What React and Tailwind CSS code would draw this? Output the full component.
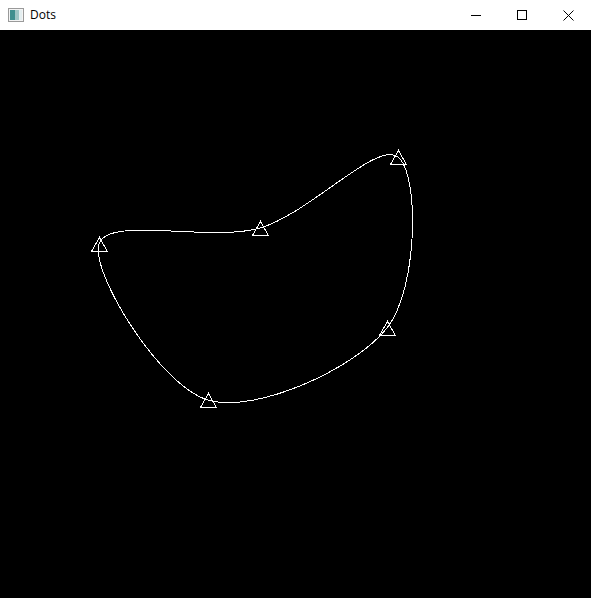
import React from "react";

const pts = [
  [99, 244],
  [260, 228],
  [398, 157],
  [387, 328],
  [208, 400],
];

function catmull(points) {
  const n = points.length;
  let d = `M ${points[0][0]} ${points[0][1]}`;
  for (let i = 0; i < n; i++) {
    const p0 = points[(i - 1 + n) % n];
    const p1 = points[i];
    const p2 = points[(i + 1) % n];
    const p3 = points[(i + 2) % n];
    const c1 = [p1[0] + (p2[0] - p0[0]) / 6, p1[1] + (p2[1] - p0[1]) / 6];
    const c2 = [p2[0] - (p3[0] - p1[0]) / 6, p2[1] - (p3[1] - p1[1]) / 6];
    d += ` C ${c1[0]} ${c1[1]} ${c2[0]} ${c2[1]} ${p2[0]} ${p2[1]}`;
  }
  return d + " Z";
}

function AppIcon() {
  return (
    <svg width="16" height="14" viewBox="0 0 16 14">
      <rect x="0.5" y="0.5" width="15" height="13" fill="#f4f4f4" stroke="#9a9a9a" />
      <rect x="2" y="2" width="5" height="10" fill="#3f8f8f" />
      <rect x="7" y="2" width="4" height="10" fill="#9fc6c6" />
      <rect x="11" y="2" width="3" height="10" fill="#e4eef0" />
    </svg>
  );
}

export default function App() {
  return (
    <div className="w-[591px] h-[598px] flex flex-col bg-black overflow-hidden">
      <div className="h-[30px] bg-white flex items-center shrink-0">
        <div className="pl-[8px] pr-[6px] flex items-center">
          <AppIcon />
        </div>
        <span
          className="text-[12px] text-black leading-none"
          style={{ fontFamily: '"Open Sans", "Noto Sans", sans-serif' }}
        >
          Dots
        </span>
        <div className="ml-auto flex h-full">
          <div className="w-[46px] h-full flex items-center justify-center">
            <svg width="10" height="10" viewBox="0 0 10 10">
              <line x1="0" y1="5.5" x2="10" y2="5.5" stroke="#000" strokeWidth="1" />
            </svg>
          </div>
          <div className="w-[46px] h-full flex items-center justify-center">
            <svg width="10" height="10" viewBox="0 0 10 10">
              <rect x="0.5" y="0.5" width="9" height="9" fill="none" stroke="#000" strokeWidth="1" />
            </svg>
          </div>
          <div className="w-[46px] h-full flex items-center justify-center">
            <svg width="11" height="11" viewBox="0 0 11 11">
              <path d="M0.5 0.5 L10.5 10.5 M10.5 0.5 L0.5 10.5" stroke="#000" strokeWidth="1" />
            </svg>
          </div>
        </div>
      </div>
      <div className="flex-1 bg-black">
        <svg width="591" height="568" viewBox="0 30 591 568">
          <path d={catmull(pts)} fill="none" stroke="#fff" strokeWidth="1" shapeRendering="crispEdges" />
          {pts.map(([x, y], i) => (
            <polygon
              key={i}
              points={`${x + 0.5},${y - 6.5} ${x - 7.5},${y + 7.5} ${x + 8.5},${y + 7.5}`}
              fill="none"
              stroke="#fff"
              strokeWidth="1"
              shapeRendering="crispEdges"
            />
          ))}
        </svg>
      </div>
    </div>
  );
}
